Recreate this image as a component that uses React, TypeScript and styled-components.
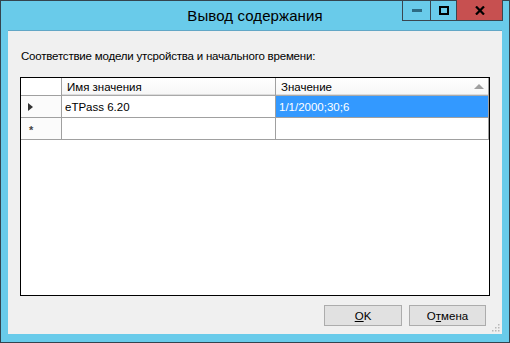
import React from "react";
import styled, { createGlobalStyle } from "styled-components";

const Global = createGlobalStyle`
  html, body { margin: 0; padding: 0; background: #fff; }
  * { box-sizing: border-box; }
`;

const Window = styled.div`
  width: 510px;
  height: 343px;
  border: 1px solid #34444f;
  background: #69cbea;
  display: flex;
  flex-direction: column;
  font-family: "Liberation Sans", Arial, sans-serif;
  font-size: 12px;
  color: #000;
`;

const TitleBar = styled.div`
  height: 29px;
  position: relative;
  display: flex;
  justify-content: center;
  align-items: flex-start;
`;

const Title = styled.div`
  font-size: 15px;
  padding-top: 6px;
  letter-spacing: 0.1px;
`;

const Controls = styled.div`
  position: absolute;
  right: 6px;
  top: -1px;
  display: flex;
  height: 21px;
  border: 1px solid #3a4650;
  border-top: none;
`;

const CtrlBtn = styled.div<{ $w: number; $close?: boolean; $first?: boolean }>`
  width: ${(p) => p.$w}px;
  height: 100%;
  background: ${(p) => (p.$close ? "#c75050" : "transparent")};
  border-left: ${(p) => (p.$first ? "none" : "1px solid #3a4650")};
  display: flex;
  align-items: center;
  justify-content: center;
`;

const Client = styled.div`
  margin: 0 7px 8px 7px;
  flex: 1;
  background: #f0f0f0;
  border-top: 1px solid #62a7c6;
  display: flex;
  flex-direction: column;
  padding: 18px 12px 0 12px;
  position: relative;
`;

const Label = styled.div`
  padding-left: 1px;
  height: 14px;
  line-height: 14px;
  font-size: 11.5px;
  letter-spacing: -0.2px;
`;

const Grid = styled.div`
  margin-top: 14px;
  width: 470px;
  height: 219px;
  border: 1px solid #000;
  background: #fff;
  display: grid;
  grid-template-columns: 41px 214px 213px;
  grid-template-rows: 18px 22px 22px;
  align-content: start;
`;

type Kind = "corner" | "head" | "rowhead" | "sel" | "data";

const Cell = styled.div<{ $kind?: Kind }>`
  border-right: 1px solid #a0a0a0;
  border-bottom: 1px solid #a0a0a0;
  background: ${(p) =>
    p.$kind === "head"
      ? "linear-gradient(#ffffff, #f6f6f6)"
      : p.$kind === "sel"
      ? "#3399ff"
      : p.$kind === "rowhead"
      ? "#fbfbfb"
      : "#fff"};
  color: ${(p) => (p.$kind === "sel" ? "#fff" : "#000")};
  display: flex;
  align-items: center;
  padding-left: ${(p) => (p.$kind === "head" ? "5px" : p.$kind === "rowhead" ? "2px" : "3px")};
  font-size: 11.5px;
  position: relative;
  white-space: nowrap;
  overflow: hidden;
  ${(p) => (p.$kind === "head" ? "border-bottom-color:#a9a9a9; box-shadow: inset 0 -1px 0 #dcdcdc;" : "")}
`;

const SortArrow = styled.div`
  position: absolute;
  right: 4px;
  top: 6px;
  width: 0;
  height: 0;
  border-left: 5px solid transparent;
  border-right: 5px solid transparent;
  border-bottom: 5px solid #a0a0a0;
`;

const RowArrow = styled.div`
  margin-left: 5px;
  width: 0;
  height: 0;
  border-top: 4px solid transparent;
  border-bottom: 4px solid transparent;
  border-left: 5px solid #333;
`;

const Star = styled.div`
  margin-left: 6px;
  font-size: 11px;
  font-weight: bold;
  color: #444;
  margin-top: 3px;
`;

const Footer = styled.div`
  margin-top: 9px;
  display: flex;
  justify-content: flex-end;
  gap: 7px;
  padding-right: 4px;
`;

const Button = styled.div<{ $w: number }>`
  width: ${(p) => p.$w}px;
  height: 21px;
  border: 1px solid #acacac;
  background: #e1e1e1;
  display: flex;
  align-items: center;
  justify-content: center;
  font-size: 11.5px;
  u { text-decoration: underline; text-underline-offset: 1px; }
`;

const Grip = styled.div`
  position: absolute;
  right: 2px;
  bottom: 2px;
  width: 10px;
  height: 10px;
`;

export default function App() {
  return (
    <>
      <Global />
      <Window>
        <TitleBar>
          <Title>Вывод содержания</Title>
          <Controls>
            <CtrlBtn $w={27} $first>
              <svg width="10" height="3"><rect width="10" height="3" fill="#2d6b84" /></svg>
            </CtrlBtn>
            <CtrlBtn $w={26}>
              <svg width="10" height="9"><rect x="1" y="1" width="8" height="7" fill="none" stroke="#000" strokeWidth="2" /></svg>
            </CtrlBtn>
            <CtrlBtn $w={46} $close>
              <svg width="10" height="9" viewBox="0 0 10 9">
                <path d="M1 0.5 L9 8.5 M9 0.5 L1 8.5" stroke="#000" strokeWidth="2.2" />
              </svg>
            </CtrlBtn>
          </Controls>
        </TitleBar>
        <Client>
          <Label>Соответствие модели утсройства и начального времени:</Label>
          <Grid>
            <Cell $kind="corner" />
            <Cell $kind="head">Имя значения</Cell>
            <Cell $kind="head">
              Значение
              <SortArrow />
            </Cell>
            <Cell $kind="rowhead"><RowArrow /></Cell>
            <Cell $kind="data">eTPass 6.20</Cell>
            <Cell $kind="sel">1/1/2000;30;6</Cell>
            <Cell $kind="rowhead"><Star>*</Star></Cell>
            <Cell $kind="data" />
            <Cell $kind="data" />
          </Grid>
          <Footer>
            <Button $w={78}><span><u>O</u>K</span></Button>
            <Button $w={77}><span>О<u>т</u>мена</span></Button>
          </Footer>
          <Grip>
            <svg width="10" height="10">
              {[[8, 0], [8, 3], [5, 3], [8, 6], [5, 6], [2, 6]].map(([x, y], i) => (
                <rect key={i} x={x} y={y + 1} width="1.5" height="1.5" fill="#b8b8b8" />
              ))}
            </svg>
          </Grip>
        </Client>
      </Window>
    </>
  );
}
